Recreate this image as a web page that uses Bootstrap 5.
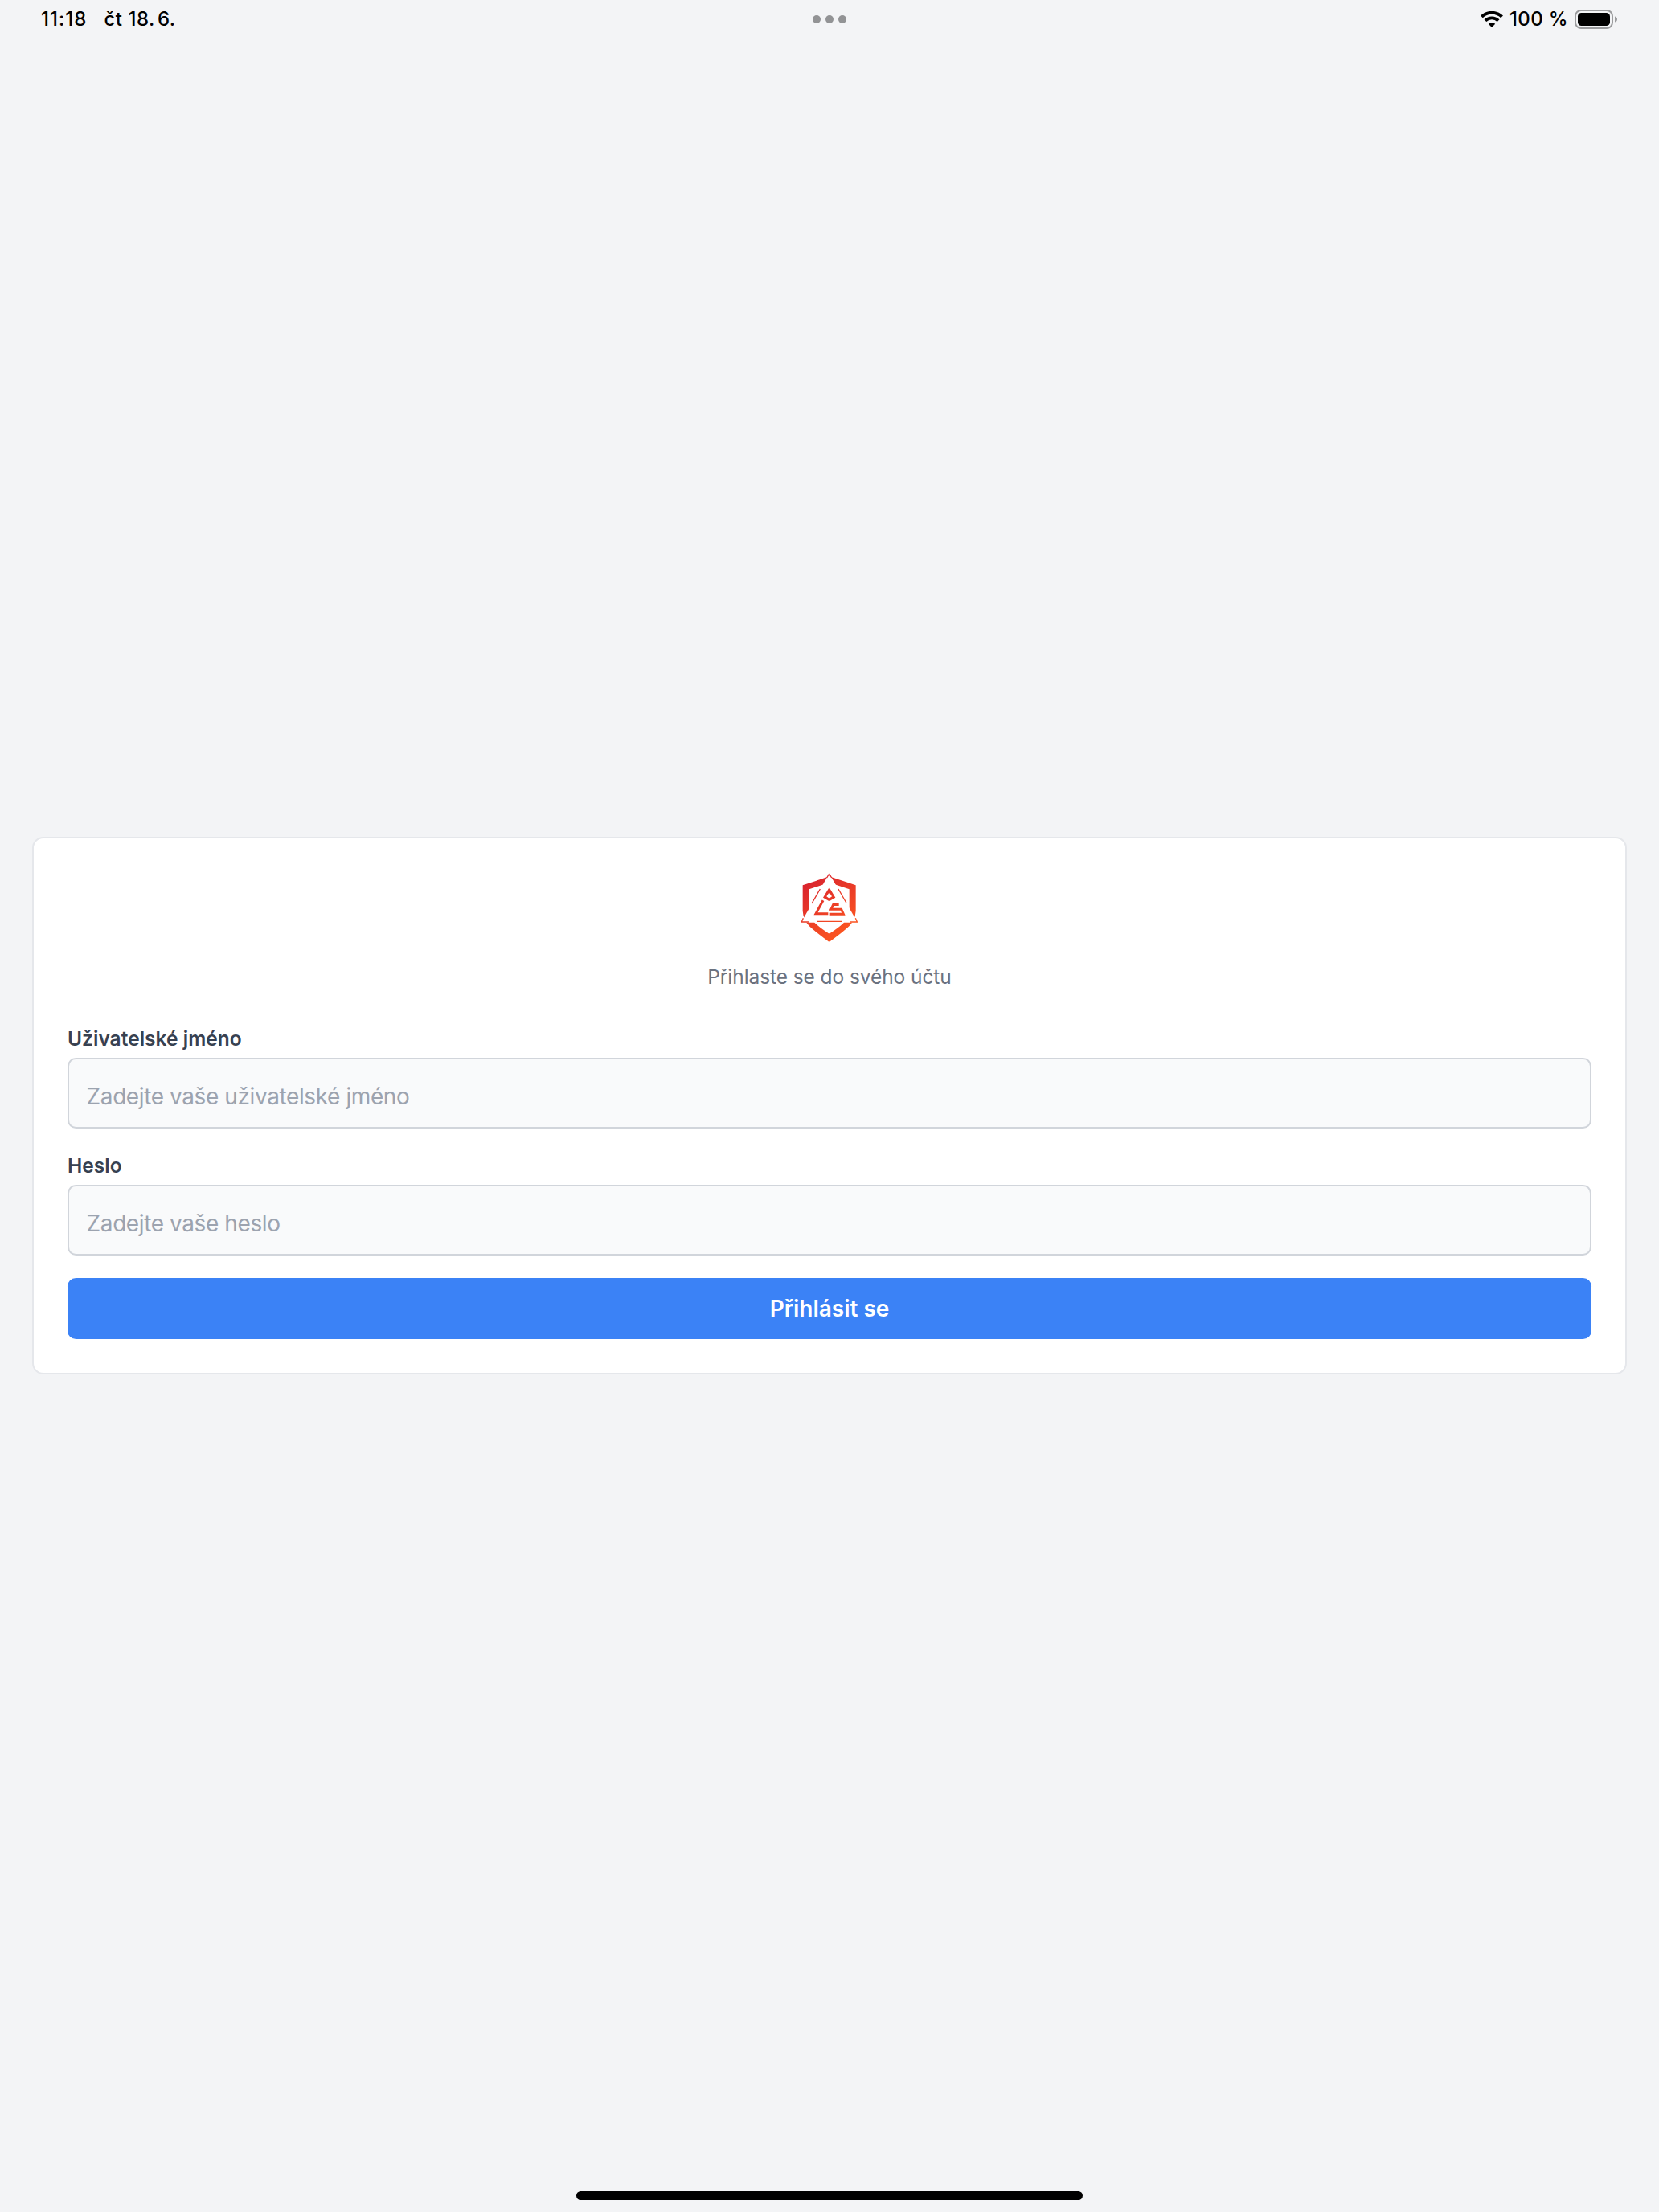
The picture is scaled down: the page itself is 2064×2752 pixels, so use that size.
<!DOCTYPE html>
<html lang="cs">
<head>
<meta charset="utf-8">
<meta name="viewport" content="width=device-width, initial-scale=1">
<title>Přihlášení</title>
<link href="https://cdn.jsdelivr.net/npm/bootstrap@5.3.0/dist/css/bootstrap.min.css" rel="stylesheet">
<style>
body{background:#f3f4f6;font-family:Inter,"Liberation Sans",sans-serif;color:#000;height:2752px;overflow:hidden}
.statusbar{height:48px;padding:0 51px;font-size:24px;font-weight:500;line-height:48px}
.statusbar>div{flex:1 1 0}
.clock{width:78.5px;letter-spacing:1px}
.date{letter-spacing:.5px}
.tight{word-spacing:-3.5px}
.dots{gap:6px}
.dot{width:10px;height:10px;border-radius:50%;background:#929395}
.battery-text{margin:0 8px;letter-spacing:.35px}
.battery{margin-right:1px}
.login-card{margin:993px 40px 0;height:669px;padding:42px;border:2px solid #e5e7eb;border-radius:14px}
.logo{width:88px;height:88px}
.subtitle{font-size:24.5px;line-height:35px;margin-top:25px;color:#6b7280;letter-spacing:-.08px}
.field-label{display:block;font-size:24.5px;line-height:35px;font-weight:600;color:#374151;margin:29px 0 6px;letter-spacing:.03px}
.first-label{margin-top:42px}
.form-control.field{height:88px;border:2px solid #d1d5db;border-radius:10.5px;background:#f9fafb;font-size:28px;padding:8px 21px 0 21.6px;letter-spacing:-.4px}
.form-control.field::placeholder{color:#9ca3af;opacity:1}
.btn.submit{height:76px;margin-top:28px;padding:1px 0 0;background:#3b82f6;border:0;border-radius:10.5px;color:#fff;font-size:28px;font-weight:600;line-height:75px;letter-spacing:-.02px}
.home-bar{width:630px;height:11px;border-radius:5.5px;background:#000;margin-bottom:15px}
</style>
<script src="https://cdn.jsdelivr.net/npm/bootstrap@5.3.0/dist/js/bootstrap.bundle.min.js"></script>
</head>
<body class="d-flex flex-column">
<header class="statusbar d-flex align-items-center">
  <div class="d-flex"><span class="clock">11:18</span><span class="date">čt <span class="tight">18. 6.</span></span></div>
  <div class="dots d-flex justify-content-center"><span class="dot"></span><span class="dot"></span><span class="dot"></span></div>
  <div class="d-flex justify-content-end align-items-center">
    <svg width="28" height="20" viewBox="0 0 28 20"><g fill="none" stroke="#000" stroke-width="3.9"><path d="M1.400 6.900a18 18 0 0 1 25.200 0"/><path d="M5.900 11.700a11.600 11.600 0 0 1 16.200 0"/></g><path d="M14 20l-4.200-4.200a6 6 0 0 1 8.400 0z"/></svg>
    <span class="battery-text">100 %</span>
    <svg class="battery" width="53" height="24" viewBox="0 0 53 24"><rect x="1" y="1" width="46" height="22" rx="7" fill="none" stroke="#9b9c9e" stroke-width="2"/><rect x="4" y="4" width="40" height="16" rx="4.500"/><path d="M50 8.500q3 1 3 3.500t-3 3.500z" fill="#9b9c9e"/></svg>
  </div>
</header>
<main class="card login-card">
  <div class="text-center d-flex flex-column align-items-center">
    <svg class="logo" viewBox="24 45 264 264">
      <defs><linearGradient id="flame" gradientUnits="userSpaceOnUse" x1="70" y1="80" x2="225" y2="290"><stop offset="0" stop-color="#d9232e"/><stop offset="1" stop-color="#ff5a1f"/></linearGradient></defs>
      <path fill="url(#flame)" fill-rule="evenodd" d="M155 61L254 94V190Q252 223 230 246Q208 267 155 306Q102 267 80 246Q58 223 56 190V94ZM155 84L80 109V185Q82 215 103 236Q120 252 155 275Q190 252 207 236Q228 215 230 185V109Z"/>
      <path fill="#fff" d="M155 50L261 233H50Z"/>
      <g fill="none" stroke="url(#flame)">
        <path stroke-width="4" d="M146 66L155 51L164 66M58 217L52 231H78M253 217L259 231H233M121 108L90 162M189 108L220 162M111 229H201"/>
        <path stroke-width="9" d="M132 151L105 200.500H151M191 166.500H170L162 183.500H200L208 201.500H158"/>
      </g>
      <path fill="url(#flame)" fill-rule="evenodd" d="M155 102L178 140L155 154L132 140ZM155 121L145 136L155 143L165 136Z"/>
    </svg>
    <div class="subtitle">Přihlaste se do svého účtu</div>
  </div>
  <form>
    <label class="field-label first-label" for="user">Uživatelské jméno</label>
    <input id="user" class="form-control field" type="text" placeholder="Zadejte vaše uživatelské jméno">
    <label class="field-label" for="pass">Heslo</label>
    <input id="pass" class="form-control field" type="password" placeholder="Zadejte vaše heslo">
    <button class="btn submit w-100" type="button">Přihlásit se</button>
  </form>
</main>
<footer class="mt-auto d-flex justify-content-center"><div class="home-bar"></div></footer>
</body>
</html>
